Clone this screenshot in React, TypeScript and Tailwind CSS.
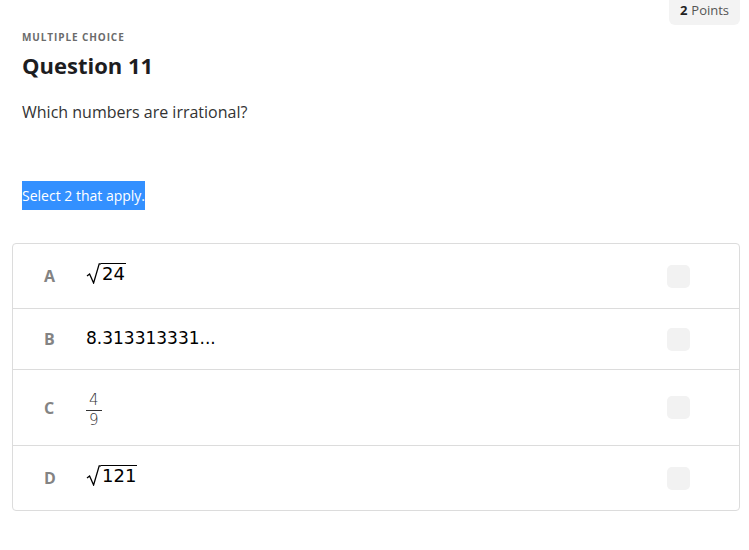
import React from 'react';

const Radical = ({ h }: { h: number }) => (
  <svg width="15" height={h} viewBox={`0 0 15 ${h}`} className="block shrink-0">
    <path
      d={`M1 ${h * 0.62} L3.6 ${h * 0.52} L7.6 ${h - 1} L13.2 0.8 L15 0.8`}
      fill="none"
      stroke="#000"
      strokeWidth="1.3"
      strokeLinejoin="miter"
    />
  </svg>
);

const Sqrt = ({ value }: { value: string }) => (
  <span className="inline-flex items-stretch font-['DejaVu_Sans',sans-serif] text-black">
    <Radical h={21} />
    <span className="border-t-[1.5px] border-black text-[18px] leading-[19px] pl-[1px] pr-[1px]">{value}</span>
  </span>
);

const Fraction = ({ num, den }: { num: string; den: string }) => (
  <span className="inline-flex flex-col items-center font-['DejaVu_Sans',sans-serif] text-[15px] leading-[16px] text-[#333] font-light">
    <span className="px-[3px] pb-[2px] border-b border-[#333]">{num}</span>
    <span className="pt-[1px]">{den}</span>
  </span>
);

const options: { letter: string; content: React.ReactNode; h: string }[] = [
  { letter: 'A', content: <Sqrt value="24" />, h: 'h-[64px]' },
  {
    letter: 'B',
    content: <span className="font-['DejaVu_Sans',sans-serif] text-[17px] text-black">8.313313331...</span>,
    h: 'h-[61px]',
  },
  { letter: 'C', content: <Fraction num="4" den="9" />, h: 'h-[76px]' },
  { letter: 'D', content: <Sqrt value="121" />, h: 'h-[65px]' },
];

export default function App() {
  return (
    <div className="w-[749px] h-[550px] bg-white font-['Open_Sans',sans-serif] relative overflow-hidden">
      <div className="absolute right-[9px] top-0 w-[71px] h-[25px] pb-[4px] bg-[#f3f3f3] rounded-b-[6px] flex items-center justify-center text-[13px] text-[#555]">
        <span className="font-bold text-[#222] mr-[4px]">2</span>Points
      </div>

      <div className="px-[22px] pt-[31px]">
        <div className="text-[10px] font-bold tracking-[0.09em] text-[#6b6b6b] leading-[13px]">MULTIPLE CHOICE</div>
        <h1 className="mt-[6px] text-[22px] font-bold text-[#1d1d1f] leading-[30px]">Question 11</h1>
        <p className="mt-[21px] text-[16px] text-[#333] leading-[22px]">Which numbers are irrational?</p>
        <div className="mt-[58px] h-[29px]">
          <span className="inline-block bg-[#3390ff] text-white text-[14px] leading-[29px] h-[29px]">Select 2 that apply.</span>
        </div>
      </div>

      <div className="mx-[12px] mt-[33px] w-[728px] border border-[#dcdcdc] rounded-[4px]">
        {options.map((o, i) => (
          <div
            key={o.letter}
            className={`flex items-center ${o.h} ${i > 0 ? 'border-t border-[#dcdcdc]' : ''}`}
          >
            <div className="w-[73px] pl-[31px] text-[16px] font-bold text-[#838383]">{o.letter}</div>
            <div className="flex-1">{o.content}</div>
            <div className="w-[23px] h-[23px] rounded-[5px] bg-[#f2f2f2] mr-[49px]" />
          </div>
        ))}
      </div>
    </div>
  );
}
